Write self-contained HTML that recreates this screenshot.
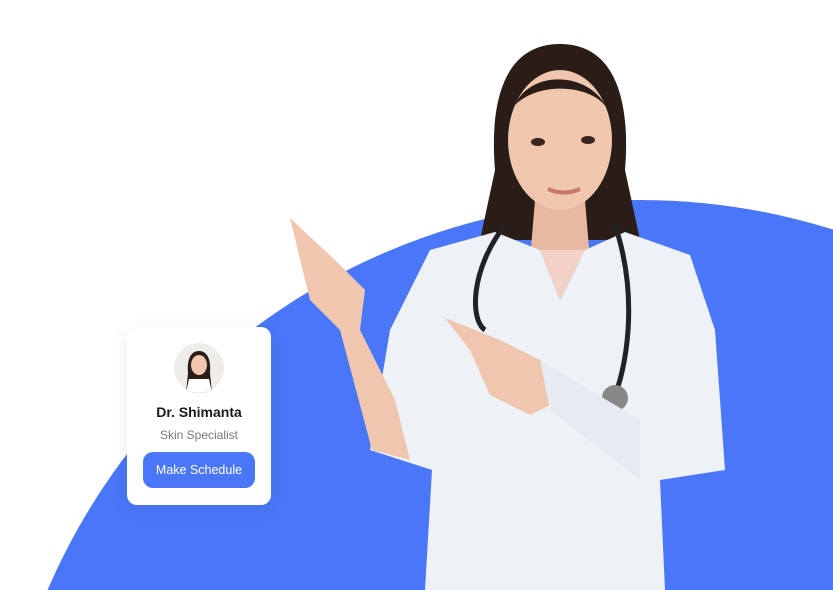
<!DOCTYPE html>
<html style="margin:0;width:833px;height:590px;overflow:hidden"><head><style>
body{margin:0;width:833px;height:590px;overflow:hidden;background:#fff;font-family:"Liberation Sans",sans-serif}
#w{position:relative;width:833px;height:590px;overflow:hidden}
.card{position:absolute;left:127px;top:327px;width:144px;height:178px;background:#fff;border-radius:10px;text-align:center;box-shadow:0 4px 20px rgba(0,0,0,.08)}
.av{width:50px;height:50px;border-radius:50%;background:#efedea;margin:16px auto 0;position:relative;overflow:hidden}
.name{font-weight:bold;font-size:14px;color:#1a1a1a;margin-top:11px}
.spec{font-size:12px;color:#777;margin-top:8px}
.btn{width:112px;height:36px;line-height:36px;background:#4a77f8;color:#fff;font-size:12.5px;border-radius:10px;margin:10px auto 0}
</style></head><body><div id="w">
<svg style="position:absolute;left:0;top:0" width="833" height="590">
 <circle cx="640" cy="845" r="645" fill="#4a77f8"/>
 <path d="M560 44 C500 44 490 110 495 170 L480 240 L640 240 L625 170 C630 110 620 44 560 44Z" fill="#2a1d18"/>
 <path d="M535 200 L585 200 L590 260 L530 260Z" fill="#e8b9a0"/>
 <ellipse cx="560" cy="140" rx="52" ry="70" fill="#f0c6ae"/>
 <path d="M515 105 C530 70 590 70 608 110 C595 85 540 80 515 105Z" fill="#2a1d18"/>
 <ellipse cx="538" cy="142" rx="7" ry="4" fill="#3a2520"/><ellipse cx="588" cy="140" rx="7" ry="4" fill="#3a2520"/>
 <path d="M548 189 Q564 196 580 189" stroke="#c9776c" stroke-width="4" fill="none"/>
 <path d="M495 232 L540 250 L560 300 L585 250 L625 232 L690 255 L715 330 L725 470 L660 480 L665 590 L425 590 L432 470 L370 450 L390 330 L430 250Z" fill="#eef1f6"/>
 <path d="M540 250 L560 300 L585 250" fill="#f4d2c8"/>
 <path d="M505 225 C470 270 470 320 485 330 M615 225 C640 300 625 370 615 395" stroke="#222" stroke-width="5" fill="none"/>
 <circle cx="615" cy="398" r="13" fill="#888"/>
 <path d="M290 218 L335 260 L365 290 L360 330 L395 400 L410 460 L372 450 L340 330 L310 300 Z" fill="#f0c6ae"/>
 <path d="M445 318 L500 340 L540 360 L560 400 L530 415 L490 395 L470 350Z" fill="#f0c6ae"/>
 <path d="M540 360 L640 420 L640 480 L550 410Z" fill="#e6eaf1"/>
</svg>
<div class="card">
 <div class="av"><svg width="50" height="50"><path d="M25 8 C15 8 13 20 14 30 L12 50 L38 50 L36 30 C37 20 35 8 25 8Z" fill="#2a1d18"/><ellipse cx="25" cy="22" rx="8" ry="10" fill="#f0c6ae"/><path d="M12 50 L15 36 L35 36 L38 50Z" fill="#fff"/></svg></div>
 <div class="name">Dr. Shimanta</div>
 <div class="spec">Skin Specialist</div>
 <div class="btn">Make Schedule</div>
</div>
</div></body></html>
